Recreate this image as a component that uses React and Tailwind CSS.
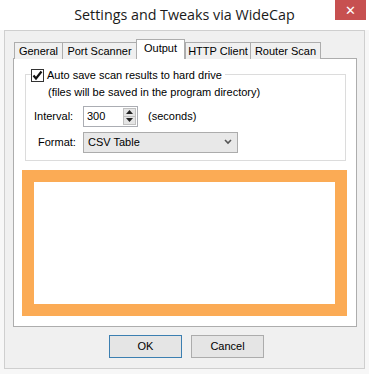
import React from "react";

const font = { fontFamily: '"Liberation Sans", Arial, sans-serif' };

function Tab({ label, selected, w }) {
  if (selected) {
    return (
      <div
        className="relative z-10 flex h-[20px] items-center justify-center border border-b-0 border-[#adadad] bg-white"
        style={{ width: w }}
      >
        <span className="-mt-[2px]">{label}</span>
      </div>
    );
  }
  return (
    <div
      className="mt-[2px] flex h-[17px] items-center justify-center border border-b-0 border-r-0 border-[#adadad] bg-[#f0f0f0] last:border-r"
      style={{ width: w }}
    >
      {label}
    </div>
  );
}

export default function App() {
  return (
    <div
      className="relative h-[374px] w-[369px] overflow-hidden bg-[#f7f7f7] text-[11px] text-black"
      style={font}
    >
      {/* title bar */}
      <div className="relative flex h-[30px] items-center justify-center bg-white">
        <span
          className="text-[14.3px] text-[#1a1a1a]"
          style={{ fontFamily: '"Open Sans", "Noto Sans", sans-serif' }}
        >
          Settings and Tweaks via WideCap
        </span>
        <div className="absolute right-[3px] top-0 flex h-[20px] w-[31px] items-center justify-center bg-[#c75050] text-[13px] leading-none text-white">
          ✕
        </div>
      </div>

      {/* client */}
      <div className="mx-[4px] h-[339px] border border-[#cfcfcf] bg-[#f0f0f0] pl-[8px] pr-[7px] pt-[9px]">
        {/* tab strip */}
        <div className="flex h-[19px] items-end pl-[1px]">
          <Tab label="General" w={48} />
          <Tab label="Port Scanner" w={74} />
          <Tab label="Output" selected w={49} />
          <Tab label="HTTP Client" w={65} />
          <Tab label="Router Scan" w={71} />
        </div>
        {/* panel */}
        <div className="-mt-px h-[269px] w-[344px] border border-[#adadad] bg-white px-[8px] pt-[15px]">
          {/* group box */}
          <div className="relative ml-[3px] h-[87px] w-[321px] border border-[#dcdcdc]">
            <div className="absolute -top-[8px] left-[5px] flex items-center bg-white pr-[3px]">
              <div className="flex h-[13px] w-[13px] items-center justify-center border border-[#333] bg-white">
                <svg width="11" height="11" viewBox="0 0 11 11">
                  <path d="M1.5 5.5 L4 8.5 L9.5 1.5" fill="none" stroke="#111" strokeWidth="2.2" />
                </svg>
              </div>
              <span className="ml-[3px]">Auto save scan results to hard drive</span>
            </div>
            <div className="ml-[22px] mt-[9px]">(files will be saved in the program directory)</div>
            <div className="mt-[5px] flex items-center">
              <span className="ml-[8px] w-[49px]">Interval:</span>
              <div className="flex h-[21px] w-[55px] items-center border border-[#abadb3] bg-white">
                <span className="ml-[3px] flex-1">300</span>
                <div className="mr-[1px] flex h-[17px] w-[13px] flex-col border border-[#c0c0c0] bg-[#e5e5e5]">
                  <div className="flex flex-1 items-center justify-center border-b border-[#c0c0c0]">
                    <svg width="7" height="4" viewBox="0 0 7 4"><path d="M0 4 L3.5 0 L7 4Z" fill="#222" /></svg>
                  </div>
                  <div className="flex flex-1 items-center justify-center">
                    <svg width="7" height="4" viewBox="0 0 7 4"><path d="M0 0 L3.5 4 L7 0Z" fill="#222" /></svg>
                  </div>
                </div>
              </div>
              <span className="ml-[10px]">(seconds)</span>
            </div>
            <div className="mt-[5px] flex items-center">
              <span className="ml-[12px] w-[45px]">Format:</span>
              <div className="flex h-[21px] w-[155px] items-center border border-[#acacac] bg-[#e8e8e8]">
                <span className="ml-[4px] flex-1">CSV Table</span>
                <svg className="mr-[5px]" width="8" height="6" viewBox="0 0 8 6">
                  <path d="M1 1 L4 4 L7 1" fill="none" stroke="#555" strokeWidth="1.6" />
                </svg>
              </div>
            </div>
          </div>
          {/* orange box */}
          <div className="mt-[9px] h-[146px] w-[325px] border-[12px] border-[#fbab55] bg-white" />
        </div>
        {/* buttons */}
        <div className="mt-[8px] flex justify-center gap-[9px] pl-[3px]">
          <div className="flex h-[23px] w-[73px] items-center justify-center border border-[#3c7fb1] bg-[#e5e5e5]">OK</div>
          <div className="flex h-[23px] w-[73px] items-center justify-center border border-[#acacac] bg-[#e5e5e5]">Cancel</div>
        </div>
      </div>
    </div>
  );
}
